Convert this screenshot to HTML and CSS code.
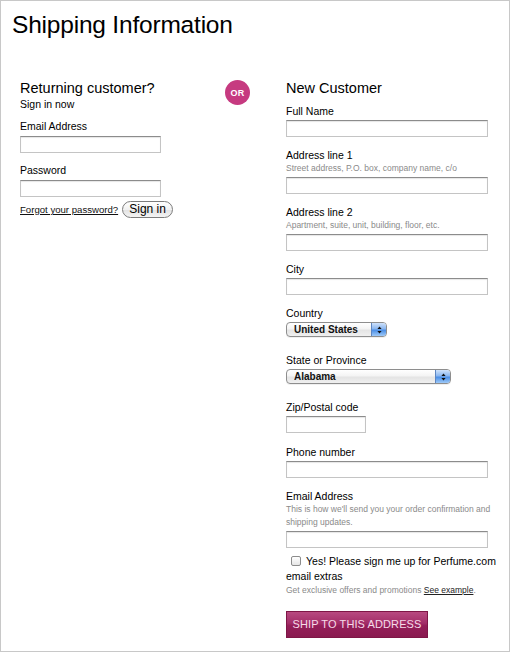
FILE: index.html
```html
<!DOCTYPE html>
<html lang="en">
<head>
<meta charset="utf-8">
<title>Shipping Information</title>
<link rel="stylesheet" href="styles.css">
</head>
<body>
<div class="page">
  <h1 class="title">Shipping Information</h1>
  <div class="columns">
    <section class="returning">
      <h2 class="heading">Returning customer?</h2>
      <p class="sub">Sign in now</p>
      <div class="lfield first">
        <label class="label">Email Address</label>
        <input class="text short" type="text">
      </div>
      <div class="lfield">
        <label class="label">Password</label>
        <input class="text short" type="password">
      </div>
      <div class="signin-row">
        <a class="forgot" href="#">Forgot your password?</a>
        <button class="pill" type="button">Sign in</button>
      </div>
    </section>

    <div class="or-col"><span class="or">OR</span></div>

    <section class="newcust">
      <h2 class="heading">New Customer</h2>
      <div class="fields">
        <div class="field">
          <label class="label">Full Name</label>
          <input class="text wide" type="text">
        </div>
        <div class="field">
          <label class="label">Address line 1</label>
          <p class="hint">Street address, P.O. box, company name, c/o</p>
          <input class="text wide" type="text">
        </div>
        <div class="field">
          <label class="label">Address line 2</label>
          <p class="hint">Apartment, suite, unit, building, floor, etc.</p>
          <input class="text wide" type="text">
        </div>
        <div class="field">
          <label class="label">City</label>
          <input class="text wide" type="text">
        </div>
        <div class="field sfield">
          <label class="label">Country</label>
          <span class="select country">
            <select class="aqua"><option>United States</option></select>
            <span class="stepper"><svg width="5" height="8" viewBox="0 0 5 8"><path d="M2.5 0.5 L4.6 3 L0.4 3 Z M0.4 5 L4.6 5 L2.5 7.5 Z" fill="#111"/></svg></span>
          </span>
        </div>
        <div class="field sfield state-field">
          <label class="label">State or Province</label>
          <span class="select state">
            <select class="aqua"><option>Alabama</option></select>
            <span class="stepper"><svg width="5" height="8" viewBox="0 0 5 8"><path d="M2.5 0.5 L4.6 3 L0.4 3 Z M0.4 5 L4.6 5 L2.5 7.5 Z" fill="#111"/></svg></span>
          </span>
        </div>
        <div class="field zip-field">
          <label class="label">Zip/Postal code</label>
          <input class="text zip" type="text">
        </div>
        <div class="field">
          <label class="label">Phone number</label>
          <input class="text wide" type="text">
        </div>
        <div class="field">
          <label class="label">Email Address</label>
          <p class="hint">This is how we'll send you your order confirmation and shipping updates.</p>
          <input class="text wide" type="text">
        </div>
      </div>
      <p class="optin"><input class="check" type="checkbox">Yes! Please sign me up for Perfume.com email extras</p>
      <p class="hint promo">Get exclusive offers and promotions <a class="example" href="#">See example</a>.</p>
      <button class="ship" type="button">SHIP TO THIS ADDRESS</button>
    </section>
  </div>
</div>
</body>
</html>
```

FILE: styles.css
```css
* { box-sizing: border-box; }

html, body {
  margin: 0;
  padding: 0;
  background: #fff;
}

body {
  font-family: "Liberation Sans", Arial, Helvetica, sans-serif;
  color: #111;
}

.page {
  width: 510px;
  height: 652px;
  border: 1px solid #c8c8c8;
  padding: 9px 0 0 11px;
}

.title {
  margin: 0;
  font-size: 24.5px;
  font-weight: normal;
  line-height: 30px;
  letter-spacing: -0.2px;
  color: #000;
}

.columns {
  display: grid;
  grid-template-columns: 205px 61px 214px;
  margin: 40px 0 0 8px;
}

.heading {
  margin: 0;
  font-size: 14.5px;
  line-height: 16px;
  font-weight: normal;
  color: #000;
}

.sub {
  margin: 2px 0 0;
  font-size: 10.5px;
  line-height: 13px;
  color: #000;
}

.label {
  display: block;
  font-size: 10.5px;
  line-height: 13px;
  color: #000;
}

.lfield { margin-top: 11px; }
.lfield.first { margin-top: 9px; }
.lfield .label { margin-bottom: 3px; }

.text {
  display: block;
  height: 17px;
  margin: 0;
  padding: 0 3px;
  border: 1px solid #c4c4c4;
  border-top-color: #8c8c8c;
  box-shadow: inset 0 1px 1px rgba(0, 0, 0, 0.10);
  background: #fff;
  font: 11px "Liberation Sans", Arial, sans-serif;
  outline: none;
}

.text.short { width: 141px; }
.text.wide { width: 202px; }
.text.zip { width: 80px; }

.signin-row {
  display: flex;
  align-items: center;
  gap: 4px;
  margin-top: 4px;
}

.forgot {
  font-size: 9.6px;
  color: #111;
  text-decoration: underline;
}

.pill {
  width: 51px;
  height: 17px;
  padding: 0;
  border: 1px solid #7c7c7c;
  border-radius: 9px;
  background: linear-gradient(#ffffff, #f1f1f1 50%, #e2e2e2 51%, #f4f4f4);
  font: 12px/15px "Liberation Sans", Arial, sans-serif;
  color: #000;
}

.or {
  display: flex;
  align-items: center;
  justify-content: center;
  width: 25px;
  height: 25px;
  border-radius: 50%;
  background: #c63a80;
  color: #fff;
  font-size: 9px;
  font-weight: bold;
  letter-spacing: 0.2px;
}

.fields { margin-top: 9px; }

.field { margin-bottom: 12px; }
.field:last-child { margin-bottom: 0; }
.field .label { margin-bottom: 2px; }
.field.zip-field { margin-bottom: 13px; }

.hint {
  margin: 0 0 2px;
  font-size: 8.5px;
  line-height: 13px;
  color: #8a8a8a;
}

.field .label + .hint { margin-top: -2px; }

.sfield { margin-bottom: 17px; }
.sfield.state-field { margin-bottom: 17px; }

.select {
  position: relative;
  display: block;
  height: 15px;
}

.select.country { width: 101px; }
.select.state { width: 165px; }

.aqua {
  display: block;
  width: 100%;
  height: 15px;
  margin: 0;
  padding: 0 18px 0 7px;
  appearance: none;
  -webkit-appearance: none;
  border: 1px solid #8e8e8e;
  border-radius: 4px;
  background: linear-gradient(#ffffff, #f4f4f4 45%, #e4e4e4 55%, #f0f0f0);
  font: bold 10px/13px "Liberation Sans", Arial, sans-serif;
  color: #111;
  box-shadow: 0 1px 0 rgba(0,0,0,0.06);
}

.stepper {
  position: absolute;
  top: 1px;
  right: 1px;
  width: 15px;
  height: 13px;
  display: flex;
  align-items: center;
  justify-content: center;
  border-left: 1px solid #5d86c2;
  border-radius: 0 3px 3px 0;
  background: linear-gradient(#cfe2fb, #8ab6ef 45%, #4a8ee6 55%, #9fcaf8);
}

.optin {
  margin: 6px 0 0;
  font-size: 10.5px;
  line-height: 15px;
  color: #000;
}

.check {
  appearance: none;
  -webkit-appearance: none;
  display: inline-block;
  width: 10px;
  height: 10px;
  margin: 0 5px 0 5px;
  vertical-align: -1px;
  border: 1px solid #8c8c8c;
  border-radius: 2px;
  background: linear-gradient(#ffffff, #e6e6e6);
}

.hint.promo { margin: 0; }

.example {
  color: #222;
  text-decoration: underline;
}

.ship {
  display: block;
  width: 142px;
  height: 27px;
  margin-top: 14px;
  padding: 0;
  border: 1px solid #7e1646;
  background: linear-gradient(#b84a80, #a32e68 45%, #941f59 55%, #8a1a50);
  color: #f6dbe8;
  font: 11px/25px "Liberation Sans", Arial, sans-serif;
  letter-spacing: 0.1px;
  text-align: center;
}
```
